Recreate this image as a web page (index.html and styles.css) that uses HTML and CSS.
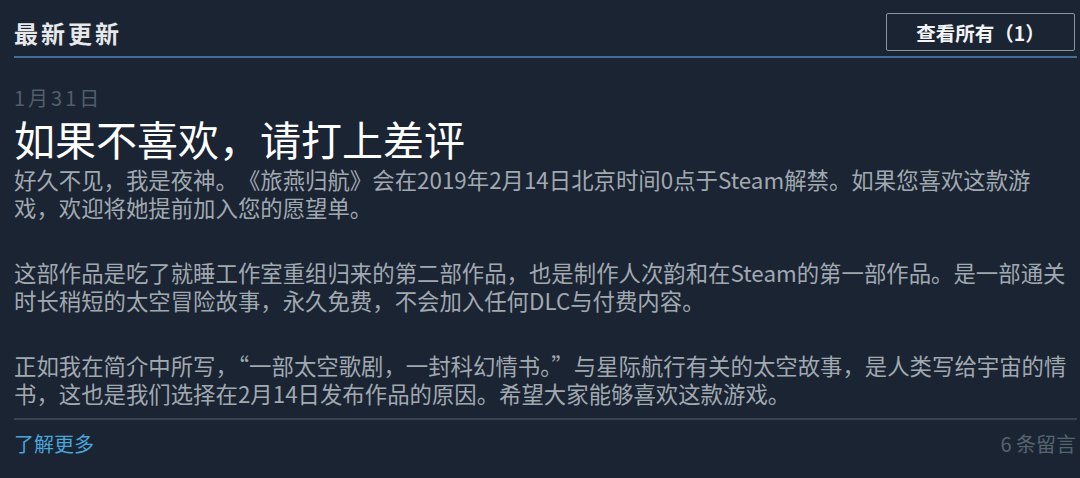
FILE: index.html
```html
<!DOCTYPE html>
<html lang="zh-CN">
<head>
  <meta charset="UTF-8" />
  <meta name="viewport" content="width=device-width, initial-scale=1.0"/>
  <title>最新更新</title>
  <link rel="stylesheet" href="styles.css">
</head>
<body>
  <div class="updates">
    <div class="updates-header">
      <h2>最新更新</h2>
      <button class="view-all">查看所有（1）</button>
    </div>

    <!-- Latest announcement -->
    <div class="announcement">
      <div class="announcement-date">1月31日</div>
      <h1 class="announcement-title">如果不喜欢，请打上差评</h1>
      <div class="announcement-body">
        <p>好久不见，我是夜神。《旅燕归航》会在2019年2月14日北京时间0点于Steam解禁。如果您喜欢这款游戏，欢迎将她提前加入您的愿望单。</p>
        <p>这部作品是吃了就睡工作室重组归来的第二部作品，也是制作人次韵和在Steam的第一部作品。是一部通关时长稍短的太空冒险故事，永久免费，不会加入任何DLC与付费内容。</p>
        <p>正如我在简介中所写，“一部太空歌剧，一封科幻情书。”与星际航行有关的太空故事，是人类写给宇宙的情书，这也是我们选择在2月14日发布作品的原因。希望大家能够喜欢这款游戏。</p>
      </div>
      <div class="announcement-footer">
        <a href="#" class="read-more">了解更多</a>
        <span class="comments">6 条留言</span>
      </div>
    </div>
  </div>
</body>
</html>
```

FILE: styles.css
```css
body {
  margin: 0;
  font-family: "Noto Sans CJK SC", "Noto Sans", sans-serif;
  background: #1b2433;
  color: #a1a9b0;
}

.updates {
  width: 1063px;
  padding: 13px 0 0 14px;
}

.updates-header {
  display: flex;
  justify-content: space-between;
  align-items: center;
  padding-bottom: 5px;
  border-bottom: 2px solid #3f6e96;
}

.updates-header h2 {
  margin: 2px 0 0;
  font-size: 24px;
  font-weight: bold;
  letter-spacing: 3px;
  line-height: 30px;
  color: #e6e8ea;
}

.view-all {
  width: 189px;
  height: 38px;
  margin-right: 2px;
  background: transparent;
  border: 1px solid #8c939b;
  border-radius: 2px;
  color: #f2f4f5;
  font-family: inherit;
  font-size: 19.5px;
  font-weight: bold;
  cursor: pointer;
}

.announcement-date {
  margin-top: 29px;
  font-size: 20px;
  line-height: 22px;
  letter-spacing: 3px;
  color: #525e6c;
}

.announcement-title {
  margin: 7px 0 5px;
  font-size: 41px;
  font-weight: normal;
  line-height: 44px;
  color: #ffffff;
}

.announcement-body p {
  width: 1053px;
  margin: 0 0 37px;
  font-size: 22.4px;
  line-height: 28px;
}

.announcement-body p:first-child {
  text-spacing-trim: space-all;
}

.announcement-body p:last-child {
  margin-bottom: 11px;
}

.announcement-footer {
  display: flex;
  justify-content: space-between;
  align-items: center;
  padding-top: 12px;
  border-top: 2px solid #364455;
  font-size: 20px;
  line-height: 24px;
}

.read-more {
  color: #4aa6da;
  text-decoration: none;
}

.comments {
  color: #56646f;
  margin-right: 1px;
}
```
